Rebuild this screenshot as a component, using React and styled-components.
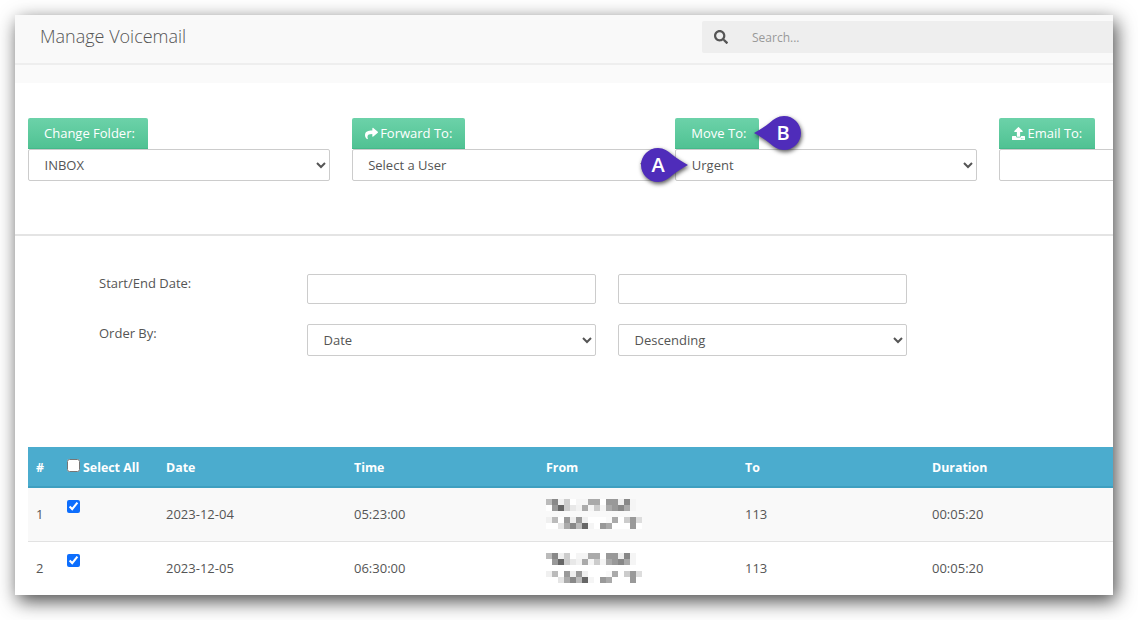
import React from "react";
import styled, { createGlobalStyle } from "styled-components";
import { FaSearch, FaShare, FaUpload } from "react-icons/fa";

const Global = createGlobalStyle`
  html, body { margin: 0; padding: 0; background: #fff; }
  body { font-family: "Open Sans", "Liberation Sans", sans-serif; font-size: 13px; color: #555; }
  * { box-sizing: border-box; }
`;

const Stage = styled.div`
  position: relative;
  width: 1138px;
  height: 620px;
  padding: 15px 25px 25px 15px;
  overflow: hidden;
`;

const Window = styled.div`
  width: 1098px;
  height: 580px;
  background: #fff;
  overflow: hidden;
  box-shadow: 3px 6px 18px rgba(0, 0, 0, 0.72);
`;

const Header = styled.header`
  display: flex;
  height: 50px;
  padding: 6px 0 4px 25px;
  background: #f9f9f9;
  border-bottom: 2px solid #eeeeee;
  align-items: flex-start;
  justify-content: space-between;
`;

const Title = styled.h1`
  margin: 3px 0 0;
  font-size: 18px;
  line-height: 24px;
  font-weight: 300;
  color: #555;
`;

const Search = styled.div`
  display: flex;
  align-items: center;
  width: 411px;
  height: 32px;
  background: #eeeeee;
  border-radius: 2px 0 0 2px;
  color: #999;
  font-size: 12px;
`;

const SearchIcon = styled.span`
  display: flex;
  width: 50px;
  padding-left: 12px;
  color: #555;
  font-size: 14px;
`;

const SubBar = styled.div`
  height: 18px;
  background: #fafafa;
`;

const Actions = styled.section`
  display: flex;
  gap: 21.67px;
  height: 153px;
  padding: 35px 0 0 13px;
  border-bottom: 2px solid #e4e4e4;
`;

const ActionColumn = styled.div`
  display: flex;
  flex: 0 0 302px;
  flex-direction: column;
  align-items: flex-start;
`;

const GreenButton = styled.button`
  display: flex;
  align-items: center;
  gap: ${(p) => (p.$icon ? "2.5px" : "0")};
  height: 31px;
  padding: 0 13px 0 ${(p) => (p.$icon ? "13px" : "16px")};
  border: 0;
  border-bottom: 1px solid #45b98a;
  border-radius: 2px 2px 0 0;
  background: linear-gradient(#6cd2a9, #50c293);
  color: #fff;
  font: 400 13px "Open Sans", sans-serif;
`;

const Select = styled.select`
  width: 100%;
  height: 32px;
  padding: 0 11.5px;
  border: 1px solid #cccccc;
  border-radius: 2px;
  background-color: #fff;
  color: #555;
  font: 400 13px "Open Sans", sans-serif;
`;

const TextField = styled.input`
  width: 100%;
  height: 30px;
  border: 1px solid #cccccc;
  border-radius: 2px;
  background: #fff;
`;

const FilterForm = styled.section`
  display: grid;
  grid-template-columns: 186px 289px 289px;
  grid-template-rows: 30px 32px;
  column-gap: 22px;
  row-gap: 20px;
  height: 211px;
  padding: 38px 0 0 84px;
`;

const FieldLabel = styled.label`
  font-size: 13px;
  line-height: 18px;
`;

const Table = styled.table`
  width: 1200px;
  margin-left: 13px;
  border-collapse: collapse;
  table-layout: fixed;
`;

const HeadCell = styled.th`
  height: 40px;
  padding: 2px 8px 0;
  background: #4bacce;
  border-bottom: 2px solid #3e9fc0;
  color: #fff;
  font-size: 12.4px;
  font-weight: 700;
  text-align: left;
`;

const Row = styled.tr`
  background: ${(p) => (p.$odd ? "#f9f9f9" : "#fff")};
  border-bottom: 1px solid #e2e2e2;
`;

const Cell = styled.td`
  height: 54px;
  padding: 0 8px;
  color: #555;
  font-size: 13px;
`;

const CheckCell = styled(Cell)`
  padding-top: 12px;
  vertical-align: top;
`;

const Check = styled.input`
  display: block;
  width: 13px;
  height: 13px;
  margin: 0;
  accent-color: #0d6efd;
`;

const SelectAll = styled.span`
  display: flex;
  align-items: center;
  gap: 3px;
`;

const HeadCheck = styled(Check)`
  margin-top: -4px;
`;

const Blur = styled.svg`
  display: block;
`;

const Pin = styled.div`
  position: absolute;
  left: ${(p) => p.$x}px;
  top: ${(p) => p.$y}px;
  width: 52px;
  height: 38px;
  color: #fff;
  font-size: 20px;
  font-weight: 600;
  font-family: "Open Sans", sans-serif;
`;

const PinShape = styled.svg`
  display: block;
  overflow: visible;
  filter: drop-shadow(1px 2px 2px rgba(0, 0, 0, 0.65));
`;

const PinLetter = styled.span`
  position: absolute;
  top: 0;
  left: ${(p) => p.$x}px;
  width: 36px;
  line-height: 37px;
  text-align: center;
`;

const cells = [
  ["#bbb", "#888", "#f0f0f0", "#ccc", "#fff", "#f5f5f5", "#f5f5f5", "#aaa", "#aaa", "#fff", "#999", "#999", "#eee", "#888", "#f5f5f5"],
  ["#fff", "#999", "#666", "#ccc", "#e8e8e8", "#f2f2f2", "#aaa", "#f5f5f5", "#ccc", "#f5f5f5", "#aaa", "#999", "#888", "#aaa", "#f5f5f5"],
  null,
  ["#f0f0f0", "#bbb", "#fff", "#999", "#eee", "#999", "#f0f0f0", "#fff", "#fff", "#fff", "#fafafa", "#aaa", "#fff", "#ccc", "#999", "#ddd"],
  ["#fff", "#fff", "#e5e5e5", "#aaa", "#888", "#bbb", "#666", "#f5f5f5", "#fff", "#999", "#aaa", "#fff", "#fff", "#fff", "#999", "#fff"],
];

function Redacted() {
  return (
    <Blur width="96" height="30" viewBox="0 0 96 30" shapeRendering="crispEdges">
      {cells.map((row, r) =>
        row
          ? row.map((c, i) => <rect key={`${r}-${i}`} x={i * 6} y={r * 6} width="6" height="6" fill={c} />)
          : null
      )}
    </Blur>
  );
}

const rows = [
  { n: 1, date: "2023-12-04", time: "05:23:00" },
  { n: 2, date: "2023-12-05", time: "06:30:00" },
];

export default function App() {
  return (
    <Stage>
      <Global />
      <Window>
        <Header>
          <Title>Manage Voicemail</Title>
          <Search>
            <SearchIcon><FaSearch /></SearchIcon>
            Search...
          </Search>
        </Header>
        <SubBar />
        <Actions>
          <ActionColumn>
            <GreenButton>Change Folder:</GreenButton>
            <Select defaultValue="INBOX"><option>INBOX</option></Select>
          </ActionColumn>
          <ActionColumn>
            <GreenButton $icon><FaShare size={13} />Forward To:</GreenButton>
            <Select><option>Select a User</option></Select>
          </ActionColumn>
          <ActionColumn>
            <GreenButton>Move To:</GreenButton>
            <Select><option>Urgent</option></Select>
          </ActionColumn>
          <ActionColumn>
            <GreenButton $icon><FaUpload size={13} />Email To:</GreenButton>
            <Select><option></option></Select>
          </ActionColumn>
        </Actions>
        <FilterForm>
          <FieldLabel>Start/End Date:</FieldLabel>
          <TextField />
          <TextField />
          <FieldLabel>Order By:</FieldLabel>
          <Select><option>Date</option></Select>
          <Select><option>Descending</option></Select>
        </FilterForm>
        <Table>
          <colgroup>
            <col width="31" /><col width="99" /><col width="188" /><col width="192" />
            <col width="199" /><col width="187" /><col width="304" />
          </colgroup>
          <thead>
            <tr>
              <HeadCell>#</HeadCell>
              <HeadCell>
                <SelectAll><HeadCheck type="checkbox" />Select All</SelectAll>
              </HeadCell>
              <HeadCell>Date</HeadCell>
              <HeadCell>Time</HeadCell>
              <HeadCell>From</HeadCell>
              <HeadCell>To</HeadCell>
              <HeadCell>Duration</HeadCell>
            </tr>
          </thead>
          <tbody>
            {rows.map((r) => (
              <Row key={r.n} $odd={r.n === 1}>
                <Cell>{r.n}</Cell>
                <CheckCell><Check type="checkbox" defaultChecked /></CheckCell>
                <Cell>{r.date}</Cell>
                <Cell>{r.time}</Cell>
                <Cell><Redacted /></Cell>
                <Cell>113</Cell>
                <Cell>00:05:20</Cell>
              </Row>
            ))}
          </tbody>
        </Table>
      </Window>
      <Pin $x={639} $y={146}>
        <PinShape width="52" height="38" viewBox="0 0 52 38">
          <path d="M19 2C25 2 29 5 33 8.5C38 12.5 44 16.5 49 19C44 21.5 38 25.5 33 29.5C29 33 25 36 19 36C9.6 36 2 28.4 2 19S9.6 2 19 2Z" fill="#4f2cba" />
        </PinShape>
        <PinLetter $x={1}>A</PinLetter>
      </Pin>
      <Pin $x={751} $y={114}>
        <PinShape width="52" height="38" viewBox="0 0 52 38">
          <path d="M33 2C27 2 23 5 19 8.5C14 12.5 8 16.5 3 19C8 21.5 14 25.5 19 29.5C23 33 27 36 33 36C42.4 36 50 28.4 50 19S42.4 2 33 2Z" fill="#4f2cba" />
        </PinShape>
        <PinLetter $x={14}>B</PinLetter>
      </Pin>
    </Stage>
  );
}
